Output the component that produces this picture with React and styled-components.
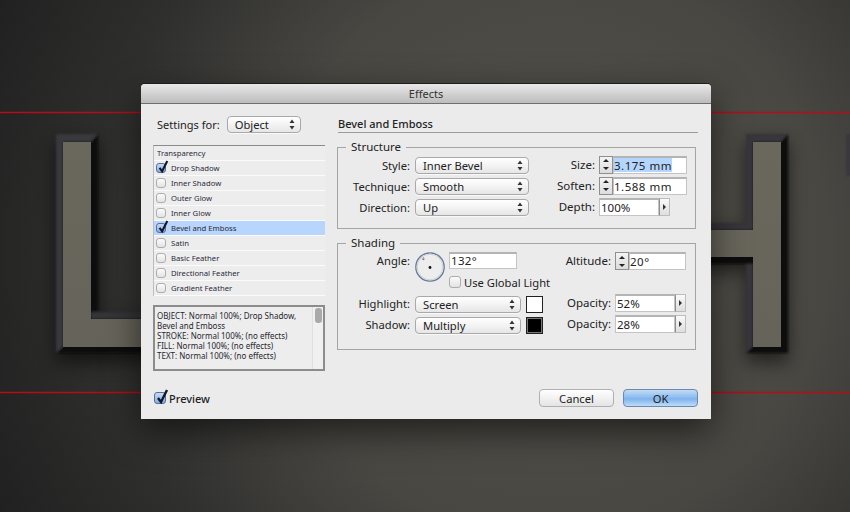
import React from 'react';
import styled, { createGlobalStyle } from 'styled-components';

const GlobalStyle = createGlobalStyle`
    html, body {
        margin: 0;
        padding: 0;
        background: #2a2a2a;
    }
    * {
        box-sizing: border-box;
    }
`;

const Stage = styled.div`
    position: relative;
    width: 850px;
    height: 512px;
    overflow: hidden;
    padding: 84px 0 0 141px;
    font-family: 'Noto Sans', 'Open Sans', sans-serif;
    color: #222;
    background: radial-gradient(ellipse 620px 640px at 550px 250px, #55534b 0%, #484742 45%, #2f2f2e 72%, #1f1f1f 100%);
`;

const Artwork = styled.svg`
    position: absolute;
    left: 0;
    top: 0;
`;

const Dialog = styled.div`
    position: relative;
    width: 570px;
    height: 335px;
    display: flex;
    flex-direction: column;
    background: #ebebeb;
    border-radius: 4px 4px 0 0;
    box-shadow: 0 -1px 0 #1d1d1d, 0 12px 36px rgba(0, 0, 0, 0.6);
`;

const TitleBar = styled.div`
    height: 20px;
    flex: none;
    display: flex;
    align-items: center;
    justify-content: center;
    font-size: 11px;
    color: #333;
    background: linear-gradient(#e8e8e8, #bcbcbc);
    border-bottom: 1px solid #6f6f6f;
    border-radius: 4px 4px 0 0;
`;

const Body = styled.div`
    display: flex;
    gap: 13px;
    padding: 12px 13px 0 12px;
`;

const LeftColumn = styled.div`
    width: 172px;
    flex: none;
`;

const RightColumn = styled.div`
    width: 360px;
    flex: none;
`;

const SettingsRow = styled.div`
    height: 17px;
    display: flex;
    align-items: center;
    gap: 7px;
    padding-left: 4px;
    margin-bottom: 12px;
    font-size: 11px;
`;

const SelectBox = styled.div`
    width: ${(p) => p.$w}px;
    height: 17px;
    flex: none;
    display: flex;
    align-items: center;
    justify-content: space-between;
    padding: 0 5px 0 7px;
    font-size: 11.2px;
    background: linear-gradient(#ffffff, #f3f3f3 50%, #e6e6e6);
    border: 1px solid #a9a9a9;
    border-radius: 4px;
    box-shadow: 0 1px 0 rgba(255, 255, 255, 0.7);
`;

const EffectList = styled.div`
    border-top: 1px solid #8b8b8b;
    border-left: 1px solid #bdbdbd;
    margin-bottom: 9px;
`;

const EffectRow = styled.div`
    height: 15px;
    display: flex;
    align-items: center;
    gap: 5px;
    padding-left: ${(p) => (p.$plain ? 3 : 2)}px;
    font-size: 7.7px;
    color: #2a2a3a;
    background: ${(p) => (p.$selected ? '#b7d5fd' : '#ededed')};
    border-bottom: 1px solid #fbfbfb;
`;

const Check = styled.span`
    position: relative;
    display: block;
    flex: none;
    width: ${(p) => p.$size}px;
    height: ${(p) => p.$size}px;
    border-radius: 3px;
    border: 1px solid ${(p) => (p.$on ? '#59709b' : '#adadad')};
    background: ${(p) =>
        p.$on ? 'linear-gradient(#c8daf3, #86acdf)' : 'linear-gradient(#fbfbfb, #e3e3e3)'};
`;

const CheckMark = styled.svg`
    position: absolute;
    left: 0;
    top: -4px;
`;

const Summary = styled.div`
    height: 66px;
    display: flex;
    justify-content: space-between;
    border: 2px solid #8c8c8c;
    background: #ededed;
`;

const SummaryText = styled.div`
    padding: 4px 0 0 2px;
    font-size: 8px;
    line-height: 10px;
    white-space: nowrap;
    color: #26262f;
`;

const ScrollTrack = styled.div`
    width: 11px;
    flex: none;
    padding: 1px 0 0 2px;
    background: #f0f0f0;
    border-left: 1px solid #e0e0e0;
`;

const ScrollThumb = styled.div`
    width: 7px;
    height: 15px;
    border-radius: 3px;
    background: #a9a9a9;
`;

const Heading = styled.div`
    height: 17px;
    font-size: 11px;
    font-weight: 500;
    line-height: 15px;
    border-bottom: 1px solid #9c9c9c;
`;

const Group = styled.fieldset`
    margin: 7px 2px 0 -1px;
    padding: ${(p) => p.$top}px 0 ${(p) => p.$bottom}px 0;
    border: 1px solid #a4a4a4;
    display: flex;
    min-width: 0;
`;

const GroupTitle = styled.legend`
    margin-left: 8px;
    padding: 0 5px;
    height: 14px;
    font-size: 11.5px;
    line-height: 14px;
`;

const Columns = styled.div`
    display: flex;
`;

const FieldColumn = styled.div`
    width: ${(p) => p.$w}px;
    margin-top: ${(p) => p.$shift || 0}px;
    flex: none;
`;

const FieldRow = styled.div`
    height: ${(p) => p.$h}px;
    margin-top: ${(p) => p.$gap || 0}px;
    display: flex;
    align-items: ${(p) => (p.$top ? 'flex-start' : 'center')};
`;

const FieldLabel = styled.div`
    width: ${(p) => p.$w}px;
    flex: none;
    text-align: right;
    margin-right: ${(p) => p.$gap}px;
    font-size: ${(p) => p.$size || 11.2}px;
    line-height: 18px;
`;

const NumberField = styled.div`
    width: ${(p) => p.$w}px;
    height: 18px;
    display: flex;
`;

const Spinner = styled.div`
    width: 14px;
    flex: none;
    display: flex;
    flex-direction: column;
    align-items: center;
    justify-content: space-around;
    background: linear-gradient(#f4f4f4, #dcdcdc);
    border: 1px solid #8f8f8f;
`;

const Triangle = styled.span`
    width: 0;
    height: 0;
    border-left: 3px solid transparent;
    border-right: 3px solid transparent;
    ${(p) => (p.$down ? 'border-top: 3px solid #222;' : 'border-bottom: 3px solid #222;')}
`;

const NumberInput = styled.div`
    flex: 1;
    padding-left: ${(p) => (p.$tight ? 0 : 1)}px;
    font-size: 11.5px;
    letter-spacing: ${(p) => (p.$tight ? 0.5 : 0)}px;
    line-height: 15px;
    white-space: nowrap;
    background: #fff;
    border: 1px solid #c4c4c4;
    border-top: 2px solid #b4b4b4;
`;

const Selected = styled.span`
    display: inline-block;
    background: #b4d5fe;
    height: 14px;
`;

const FlyoutButton = styled.div`
    width: 11px;
    flex: none;
    display: flex;
    align-items: center;
    justify-content: center;
    background: linear-gradient(#fafafa, #dedede);
    border: 1px solid #bdbdbd;
    border-left-color: #8f8f8f;
`;

const FlyoutArrow = styled.span`
    width: 0;
    height: 0;
    border-top: 3px solid transparent;
    border-bottom: 3px solid transparent;
    border-left: 3px solid #333;
`;

const AngleBlock = styled.div`
    display: flex;
    gap: 4px;
`;

const AngleSide = styled.div`
    display: flex;
    flex-direction: column;
    gap: 7px;
`;

const AngleInput = styled.div`
    width: 68px;
    height: 17px;
    padding-left: 1px;
    font-size: 11.5px;
    letter-spacing: 0.3px;
    line-height: 14px;
    background: #fff;
    border: 1px solid #c4c4c4;
    border-top: 2px solid #b4b4b4;
`;

const GlobalLight = styled.div`
    display: flex;
    align-items: center;
    gap: 3px;
    font-size: 11.2px;
    white-space: nowrap;
    height: 12px;
`;

const Swatch = styled.div`
    width: 17px;
    height: 17px;
    flex: none;
    margin-left: 5px;
    background: ${(p) => p.$color};
    border: 1px solid #222;
    box-shadow: inset 0 0 0 1px ${(p) => (p.$color === '#000' ? '#777' : '#fff')};
`;

const Footer = styled.div`
    margin-top: auto;
    display: flex;
    align-items: center;
    justify-content: space-between;
    padding: 0 13px 12px 13px;
`;

const PreviewToggle = styled.div`
    display: flex;
    align-items: center;
    gap: 3px;
    font-size: 11px;
    font-weight: 500;
`;

const ButtonRow = styled.div`
    display: flex;
    gap: 9px;
`;

const Button = styled.div`
    width: 75px;
    height: 18px;
    display: flex;
    align-items: center;
    justify-content: center;
    font-size: 11.2px;
    border-radius: 4px;
    border: 1px solid ${(p) => (p.$primary ? '#6f87ad' : '#b0b0b0')};
    background: ${(p) =>
        p.$primary
            ? 'linear-gradient(#c4dcf6, #8fbdf0 45%, #7fb3ee 55%, #bcdcf8)'
            : 'linear-gradient(#ffffff, #f2f2f2 50%, #e4e4e4)'};
`;

const UpDown = () => (
    <svg width="6" height="11" viewBox="0 0 6 11">
        <path d="M3 0.5 L5.5 4 H0.5 Z M3 10.5 L5.5 7 H0.5 Z" fill="#333" />
    </svg>
);

const Checkbox = ({ on, size }) => (
    <Check $on={on} $size={size}>
        {on && (
            <CheckMark width={size + 2} height={size + 4} viewBox="0 0 14 16">
                <path d="M3 9 L6 13 L12 1" fill="none" stroke="#10182c" strokeWidth="2.4" />
            </CheckMark>
        )}
    </Check>
);

const Stepper = ({ children, width = 88 }) => (
    <NumberField $w={width}>
        <Spinner>
            <Triangle />
            <Triangle $down />
        </Spinner>
        <NumberInput $tight>{children}</NumberInput>
    </NumberField>
);

const FlyoutField = ({ children }) => (
    <NumberField $w={71}>
        <NumberInput>{children}</NumberInput>
        <FlyoutButton>
            <FlyoutArrow />
        </FlyoutButton>
    </NumberField>
);

const Select = ({ width, children }) => (
    <SelectBox $w={width}>
        <span>{children}</span>
        <UpDown />
    </SelectBox>
);

const AngleDial = () => (
    <svg width="30" height="30" viewBox="0 0 30 30">
        <circle cx="15" cy="15" r="14.2" fill="#ededed" stroke="#66789c" strokeWidth="1.3" />
        <circle cx="15" cy="15" r="12.8" fill="none" stroke="#d2d2d2" strokeWidth="1" />
        <circle cx="15" cy="15.5" r="1.4" fill="#111" />
        <path d="M7 7 H10 M8.5 5.5 V8.5" stroke="#555" strokeWidth="0.8" strokeDasharray="1 0.6" />
    </svg>
);

const LetterArt = () => (
    <Artwork width="850" height="512" viewBox="0 0 850 512">
        <defs>
            <filter id="soft" x="-5%" y="-5%" width="110%" height="110%">
                <feGaussianBlur stdDeviation="0.9" />
            </filter>
            <filter id="drop" x="-30%" y="-30%" width="160%" height="160%">
                <feGaussianBlur stdDeviation="9" />
            </filter>
            <linearGradient id="face" x1="0" y1="0" x2="0" y2="1">
                <stop offset="0" stopColor="#6a685d" />
                <stop offset="1" stopColor="#66645a" />
            </linearGradient>
        </defs>
        <g filter="url(#drop)" fill="#000" opacity="0.55">
            <rect x="56" y="142" width="42" height="220" />
            <rect x="56" y="320" width="120" height="42" />
            <rect x="746" y="142" width="42" height="220" />
            <rect x="680" y="230" width="100" height="42" />
        </g>
        <g filter="url(#soft)">
            <path d="M56 134 H98 V312 H160 V353 H56 Z" fill="#111110" />
            <path d="M56 134 H98 L91 142 H63 V347 L56 353 Z" fill="#39383c" />
            <path d="M91 312 H160 V319 H91 Z" fill="#353438" />
            <path d="M746 134 H788 V353 H746 V264 H700 V223 H746 Z" fill="#0f0f0f" />
            <path d="M746 134 H788 L781 142 H753 V230 H700 V223 H746 Z" fill="#37363a" />
            <path d="M746 264 H753 V347 L746 353 Z" fill="#37363a" />
            <rect x="846" y="134" width="6" height="42" fill="#3a393e" />
        </g>
        <path d="M63 142 H91 V319 H160 V347 H63 Z" fill="url(#face)" />
        <path d="M753 142 H781 V347 H753 V257 H700 V230 H753 Z" fill="url(#face)" />
        <line x1="0" y1="112.5" x2="850" y2="112.5" stroke="#b60d16" strokeWidth="1.3" />
        <line x1="0" y1="392.5" x2="850" y2="392.5" stroke="#b60d16" strokeWidth="1.3" />
    </Artwork>
);

const EFFECTS = [
    { name: 'Drop Shadow', on: true },
    { name: 'Inner Shadow' },
    { name: 'Outer Glow' },
    { name: 'Inner Glow' },
    { name: 'Bevel and Emboss', on: true, selected: true },
    { name: 'Satin' },
    { name: 'Basic Feather' },
    { name: 'Directional Feather' },
    { name: 'Gradient Feather' },
];

const App = () => {
    return (
        <Stage>
            <GlobalStyle />
            <LetterArt />
            <Dialog>
                <TitleBar>Effects</TitleBar>
                <Body>
                    <LeftColumn>
                        <SettingsRow>
                            Settings for:
                            <Select width={74}>Object</Select>
                        </SettingsRow>
                        <EffectList>
                            <EffectRow $plain>Transparency</EffectRow>
                            {EFFECTS.map((effect) => (
                                <EffectRow key={effect.name} $selected={effect.selected}>
                                    <Checkbox on={effect.on} size={10} />
                                    {effect.name}
                                </EffectRow>
                            ))}
                        </EffectList>
                        <Summary>
                            <SummaryText>
                                OBJECT: Normal 100%; Drop Shadow,
                                <br />
                                Bevel and Emboss
                                <br />
                                STROKE: Normal 100%; (no effects)
                                <br />
                                FILL: Normal 100%; (no effects)
                                <br />
                                TEXT: Normal 100%; (no effects)
                            </SummaryText>
                            <ScrollTrack>
                                <ScrollThumb />
                            </ScrollTrack>
                        </Summary>
                    </LeftColumn>
                    <RightColumn>
                        <Heading>Bevel and Emboss</Heading>
                        <Group $top={1} $bottom={10}>
                            <GroupTitle>Structure</GroupTitle>
                            <Columns>
                                <FieldColumn $w={192}>
                                    <FieldRow $h={21}>
                                        <FieldLabel $w={72} $gap={5}>Style:</FieldLabel>
                                        <Select width={114}>Inner Bevel</Select>
                                    </FieldRow>
                                    <FieldRow $h={21}>
                                        <FieldLabel $w={72} $gap={5}>Technique:</FieldLabel>
                                        <Select width={114}>Smooth</Select>
                                    </FieldRow>
                                    <FieldRow $h={21}>
                                        <FieldLabel $w={72} $gap={5}>Direction:</FieldLabel>
                                        <Select width={114}>Up</Select>
                                    </FieldRow>
                                </FieldColumn>
                                <FieldColumn $w={157} $shift={-1}>
                                    <FieldRow $h={21}>
                                        <FieldLabel $w={65} $gap={4} $size={11.5}>Size:</FieldLabel>
                                        <Stepper><Selected>3.175 mm</Selected></Stepper>
                                    </FieldRow>
                                    <FieldRow $h={21}>
                                        <FieldLabel $w={65} $gap={4} $size={11.5}>Soften:</FieldLabel>
                                        <Stepper>1.588 mm</Stepper>
                                    </FieldRow>
                                    <FieldRow $h={21}>
                                        <FieldLabel $w={65} $gap={4} $size={11.5}>Depth:</FieldLabel>
                                        <FlyoutField>100%</FlyoutField>
                                    </FieldRow>
                                </FieldColumn>
                            </Columns>
                        </Group>
                        <Group $top={2} $bottom={12}>
                            <GroupTitle>Shading</GroupTitle>
                            <Columns>
                                <FieldColumn $w={192}>
                                    <FieldRow $h={43} $top>
                                        <FieldLabel $w={72} $gap={5}>Angle:</FieldLabel>
                                        <AngleBlock>
                                            <AngleDial />
                                            <AngleSide>
                                                <AngleInput>132°</AngleInput>
                                                <GlobalLight>
                                                    <Checkbox size={12} />
                                                    Use Global Light
                                                </GlobalLight>
                                            </AngleSide>
                                        </AngleBlock>
                                    </FieldRow>
                                    <FieldRow $h={18}>
                                        <FieldLabel $w={72} $gap={5}>Highlight:</FieldLabel>
                                        <Select width={106}>Screen</Select>
                                        <Swatch $color="#fff" />
                                    </FieldRow>
                                    <FieldRow $h={24}>
                                        <FieldLabel $w={72} $gap={5}>Shadow:</FieldLabel>
                                        <Select width={106}>Multiply</Select>
                                        <Swatch $color="#000" />
                                    </FieldRow>
                                </FieldColumn>
                                <FieldColumn $w={157}>
                                    <FieldRow $h={18}>
                                        <FieldLabel $w={81} $gap={4} $size={11.5}>Altitude:</FieldLabel>
                                        <Stepper width={71}>20°</Stepper>
                                    </FieldRow>
                                    <FieldRow $h={18} $gap={24}>
                                        <FieldLabel $w={81} $gap={4} $size={11.5}>Opacity:</FieldLabel>
                                        <FlyoutField>52%</FlyoutField>
                                    </FieldRow>
                                    <FieldRow $h={18} $gap={3}>
                                        <FieldLabel $w={81} $gap={4} $size={11.5}>Opacity:</FieldLabel>
                                        <FlyoutField>28%</FlyoutField>
                                    </FieldRow>
                                </FieldColumn>
                            </Columns>
                        </Group>
                    </RightColumn>
                </Body>
                <Footer>
                    <PreviewToggle>
                        <Checkbox on size={12} />
                        Preview
                    </PreviewToggle>
                    <ButtonRow>
                        <Button>Cancel</Button>
                        <Button $primary>OK</Button>
                    </ButtonRow>
                </Footer>
            </Dialog>
        </Stage>
    );
};

export default App;
